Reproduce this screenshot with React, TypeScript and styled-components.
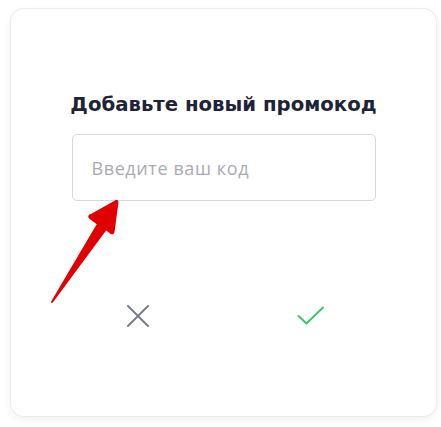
import React from "react";
import styled, { createGlobalStyle } from "styled-components";

const Global = createGlobalStyle`
  html, body { margin: 0; padding: 0; background: #ffffff; }
  body { font-family: "Open Sans", "Noto Sans", sans-serif; }
  * { box-sizing: border-box; }
`;

const Page = styled.div`
  position: relative;
  width: 441px;
  height: 427px;
  padding: 9px 5px 11px 11px;
`;

const Card = styled.div`
  height: 407px;
  background: #fff;
  border-radius: 13px;
  box-shadow: 0 0 0 1px #ededf0, 0 3px 8px rgba(30, 35, 60, 0.08);
  display: flex;
  flex-direction: column;
  align-items: center;
  padding-top: 82px;
`;

const Title = styled.h2`
  margin: 0;
  font-family: "DejaVu Sans", sans-serif;
  font-weight: 700;
  font-size: 19.7px;
  line-height: 27px;
  color: #1f2336;
  letter-spacing: 0;
  white-space: nowrap;
`;

const Input = styled.input`
  margin-top: 16px;
  width: 304px;
  height: 67px;
  border: 1px solid #d7d7dc;
  border-radius: 5px;
  padding: 0 19px;
  font-family: "Open Sans", sans-serif;
  font-size: 18px;
  letter-spacing: 0.6px;
  color: #1f2336;
  outline: none;
  &::placeholder { color: #aaaab2; }
`;

const Actions = styled.div`
  margin-top: 99px;
  width: 304px;
  display: flex;
  justify-content: space-between;
  padding: 0 49px 0 50px;
`;

const IconButton = styled.button`
  width: 32px;
  height: 32px;
  padding: 0;
  border: none;
  background: transparent;
  display: flex;
  align-items: center;
  justify-content: center;
  cursor: pointer;
`;

const Arrow = styled.svg`
  position: absolute;
  left: 0;
  top: 0;
  pointer-events: none;
`;

export default function App() {
  return (
    <>
      <Global />
      <Page>
        <Card>
          <Title>Добавьте новый промокод</Title>
          <Input placeholder="Введите ваш код" />
          <Actions>
            <IconButton aria-label="Отмена">
              <svg width="22" height="22" viewBox="0 0 22 22">
                <path d="M1 1L21 21M21 1L1 21" stroke="#7b7d8a" strokeWidth="2" strokeLinecap="square" />
              </svg>
            </IconButton>
            <IconButton aria-label="Добавить">
              <svg width="28" height="20" viewBox="0 0 28 20">
                <path d="M1.5 10L9.5 17.5L26 1.5" stroke="#3ec46d" strokeWidth="2" fill="none" strokeLinecap="round" strokeLinejoin="round" />
              </svg>
            </IconButton>
          </Actions>
        </Card>
        <Arrow width="441" height="427" viewBox="0 0 441 427">
          <path
            d="M52 302 L98 224 L90 218 Q88 216 91 215 L116 201 Q117.5 200.5 117.5 202 L113.5 232 Q113 234 111 233 L106 229 Z"
            fill="#e10000"
            stroke="#e10000"
            strokeWidth="2"
            strokeLinejoin="round"
          />
        </Arrow>
      </Page>
    </>
  );
}
